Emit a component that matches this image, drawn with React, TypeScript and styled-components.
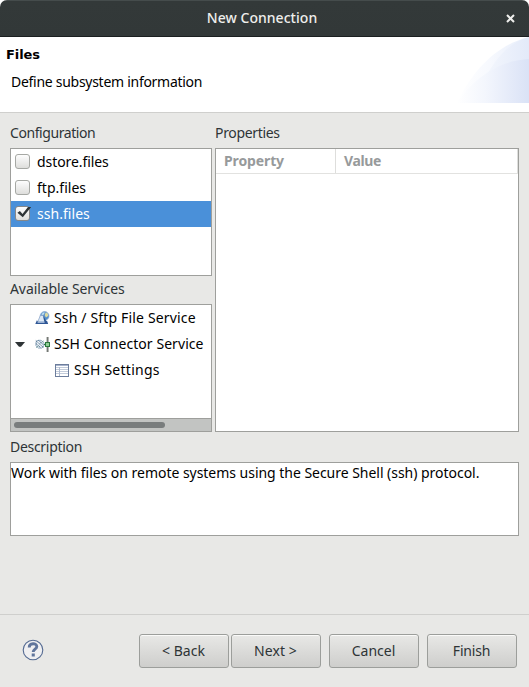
import React, { useState } from "react";
import styled, { createGlobalStyle, css } from "styled-components";

const GlobalStyle = createGlobalStyle`
  * { box-sizing: border-box; }
  html, body, #root { margin: 0; height: 100%; }
  body { background: #fff; overflow: hidden; }
  button { font: inherit; color: inherit; }
`;

const Dialog = styled.div`
  width: 529px;
  height: 687px;
  display: flex;
  flex-direction: column;
  overflow: hidden;
  background: #e8e8e6;
  border-radius: 7px 7px 0 0;
  color: #2e3436;
  font: 14px/18px "Noto Sans", "Open Sans", sans-serif;
  cursor: default;
`;

const TitleBar = styled.header`
  flex: none;
  height: 37px;
  display: grid;
  grid-template-columns: 37px 1fr 37px;
  align-items: center;
  background: linear-gradient(#333939, #323838);
  border-top: 1px solid #454c4c;
  border-bottom: 1px solid #1b1f20;
  color: #eeeeec;
`;

const Title = styled.h1`
  grid-column: 2;
  margin: 0 0 1px;
  padding-right: 5px;
  text-align: center;
  font: 500 14px/18px "Noto Sans", sans-serif;
  letter-spacing: 0.04px;
`;

const CloseButton = styled.button`
  width: 37px;
  height: 34px;
  padding: 0;
  border: 0;
  background: none;
  display: grid;
  place-items: center;
`;

const Banner = styled.section`
  flex: none;
  height: 76px;
  display: flex;
  justify-content: space-between;
  background: #fff;
  border-bottom: 1px solid #cfcfcd;
  color: #000;
`;

const BannerText = styled.div`
  padding: 8px 0 0 6px;
`;

const BannerTitle = styled.h2`
  margin: 0;
  font: bold 13px/19px "DejaVu Sans", sans-serif;
  letter-spacing: -0.1px;
`;

const BannerMessage = styled.p`
  margin: 9px 0 0 5px;
  letter-spacing: -0.28px;
`;

const Body = styled.main`
  flex: none;
  height: 501px;
  padding: 11px 10px 0;
`;

const Columns = styled.div`
  display: grid;
  grid-template-columns: 202px 304px;
  column-gap: 3px;
`;

const Column = styled.div`
  display: flex;
  flex-direction: column;
`;

const Label = styled.div<{ $track: number; $gap?: number }>`
  height: 18px;
  margin: ${(p) => p.$gap ?? 0}px 0 6px;
  letter-spacing: ${(p) => p.$track}px;
  white-space: nowrap;
`;

const Frame = styled.div<{ $height: number }>`
  height: ${(p) => p.$height}px;
  display: flex;
  flex-direction: column;
  overflow: hidden;
  background: #fff;
  border: 1px solid #9e9f9c;
  color: #000;
`;

const Row = styled.div<{ $selected?: boolean; $indent?: number; $track?: number }>`
  flex: none;
  height: 26px;
  display: flex;
  align-items: center;
  padding-left: ${(p) => p.$indent ?? 4}px;
  letter-spacing: ${(p) => p.$track ?? 0}px;
  white-space: nowrap;
  ${(p) => p.$selected && css`
    background: #4a90d9;
    color: #fff;
  `}
`;

const CheckBox = styled.span<{ $checked?: boolean }>`
  width: 15px;
  height: 15px;
  margin: 0 7px 1px 0;
  border: 1px solid ${(p) => (p.$checked ? "#86888a" : "#a6a8a4")};
  border-radius: 3px;
  background: linear-gradient(#fdfdfd, #dededc);
  svg { display: block; margin: -1px; overflow: visible; }
`;

const IconSlot = styled.span<{ $width: number; $gap: number }>`
  display: flex;
  width: ${(p) => p.$width}px;
  margin-right: ${(p) => p.$gap}px;
`;

const ScrollTrack = styled.div`
  height: 13px;
  margin-top: auto;
  padding: 3px;
  background: #c2c4c2;
  border-top: 1px solid #9e9f9c;
`;

const ScrollThumb = styled.div`
  width: 151px;
  height: 6px;
  border-radius: 3px;
  background: #797d7d;
`;

const TableHead = styled.div`
  display: grid;
  grid-template-columns: 120px 182px;
  height: 25px;
  border-bottom: 1px solid #e2e2e0;
  color: #979a9b;
  font-weight: 700;
`;

const HeadCell = styled.div<{ $track: number }>`
  padding: 3px 0 0 8px;
  border-right: 1px solid #dededc;
  letter-spacing: ${(p) => p.$track}px;
`;

const Description = styled.p`
  margin: 1px 0 0;
  white-space: nowrap;
  letter-spacing: -0.03px;
`;

const Footer = styled.footer`
  flex: 1;
  display: flex;
  align-items: flex-start;
  justify-content: space-between;
  padding: 19px 12px 0 22px;
  border-top: 1px solid #cfcfcd;
`;

const HelpButton = styled.button`
  width: 22px;
  height: 22px;
  margin-top: 5px;
  padding: 0;
  border: 0;
  background: none;
`;

const Buttons = styled.div`
  display: flex;
  gap: 8px;
`;

const ButtonPair = styled.div`
  display: flex;
  gap: 2px;
`;

const Button = styled.button<{ $track?: number }>`
  width: 90px;
  height: 34px;
  padding: 0 1px 1px 0;
  border: 1px solid #9c9e9b;
  border-radius: 3px;
  background: linear-gradient(#e8e8e6, #cececc);
  box-shadow: inset 0 1px #fafaf9;
  letter-spacing: ${(p) => p.$track ?? 0}px;
`;

const CloseIcon = () => (
  <svg width="9" height="9" viewBox="0 0 9 9" fill="none" stroke="currentColor" strokeWidth="2">
    <path d="M1 1l7 7M8 1l-7 7" />
  </svg>
);

const CheckMark = () => (
  <svg width="16" height="15" viewBox="0 0 16 15" fill="#2e3436">
    <path d="M2.4 6.8L4.9 5l2.6 2.9L13 1h3.2L7.8 11.3z" />
  </svg>
);

const BannerArt = () => (
  <svg width="75" height="66" viewBox="0 0 75 66">
    <defs>
      <linearGradient id="wash" x1="0" x2="1">
        <stop offset="0" stopColor="#fff" />
        <stop offset=".45" stopColor="#f7f9fe" />
        <stop offset="1" stopColor="#e6edfa" />
      </linearGradient>
      <linearGradient id="inner" x1="0" x2="1">
        <stop offset="0" stopColor="#f4f7fd" />
        <stop offset="1" stopColor="#e3eaf9" />
      </linearGradient>
      <linearGradient id="low" x1="0" x2="1">
        <stop offset="0" stopColor="#fff" />
        <stop offset=".4" stopColor="#f3f6fd" />
        <stop offset="1" stopColor="#dae2f6" />
      </linearGradient>
    </defs>
    <path fill="url(#wash)" d="M3 66C18 34 42 8 75 0v66z" />
    <path fill="url(#inner)" d="M30 44C40 23 54 6 75 0v44z" />
    <path fill="url(#low)" d="M3 66C18 42 46 23 75 22v44z" />
  </svg>
);

const FileServiceIcon = () => (
  <svg width="15" height="14" viewBox="0 0 15 14">
    <circle cx="9.6" cy="5" r="4.4" fill="#4f8bcb" stroke="#8aa9d0" strokeWidth=".7" />
    <path d="M10.6 1.6c1.9.1 2.9 1.7 2.5 3.5L11 6.6 9.6 4.2z" fill="#dcdaa0" />
    <path d="M7.8 1.4l2.2.1-1.4 2.3-2.4.5z" fill="#c3e2f0" />
    <path d="M5.4 4.4h2.8l1.6 6.8H2.6z" fill="#dce8f5" stroke="#7f9cc4" strokeWidth=".7" />
    <path d="M8.2 4.6L11.8 11H9.4z" fill="#2c5790" />
    <path d="M1.9 9.3L.3 13h12.9l-1.2-3.2-2 .9H3z" fill="#2f5796" />
    <path d="M2.6 11.2h7" stroke="#c8d8ee" />
  </svg>
);

const ConnectorIcon = () => (
  <svg width="15" height="15" viewBox="0 0 15 15">
    <path d="M11 0h1v15h-1z" fill="#c9cbc9" />
    <path d="M12 0h1v15h-1z" fill="#747874" />
    <path d="M13 0h1v15h-1z" fill="#b3b5b3" />
    <path d="M1.2 4.4L3 3.3h3l3 2.4v3.2l-2 2.2H3.4L.8 8.6z" fill="#eef3f8" stroke="#6f8ea8" strokeWidth=".7" />
    <path d="M.8 3.6l8 7.2M3.4 3.4l5.2 4.5M.8 6.4l5 4.4" stroke="#355b7c" strokeWidth=".8" strokeDasharray="1.6 .5" />
    <path d="M1 10.8l2.8-2.4M5.6 6.4l3-2.6" stroke="#5e8d91" strokeWidth=".7" />
    <path d="M9 7.5h2" stroke="#26744c" />
    <rect x="10.5" y="5.5" width="4" height="4" fill="#8fcf95" stroke="#2a773c" />
  </svg>
);

const SettingsIcon = () => (
  <svg width="14" height="13" viewBox="0 0 14 13" shapeRendering="crispEdges">
    <rect x=".5" y=".5" width="13" height="12" fill="#fff" stroke="#6c7d9c" />
    <path d="M1 1.5h12" stroke="#a7b3cc" />
    <path d="M1 3.5h12M1 5.5h12M1 7.5h12M1 9.5h12" stroke="#c3ccdb" />
    <path d="M4.5 3v9" stroke="#b0bbcf" />
  </svg>
);

const Expander = () => (
  <svg width="10" height="6" viewBox="0 0 10 6" fill="#2e3436">
    <path d="M0 1h10L6 5.8H4z" />
  </svg>
);

const HelpIcon = () => (
  <svg width="22" height="22" viewBox="0 0 22 22" fill="none">
    <circle cx="11" cy="11" r="9.8" fill="#efeff1" stroke="#536991" strokeWidth="1.1" />
    <path d="M7.2 8.4C7.2 3.6 14.8 3.7 14.8 7.6c0 2.6-3.6 2.6-3.6 5.4" stroke="#60759c" strokeWidth="2.9" />
    <path d="M9.7 14.5h3.1v3H9.7z" fill="#60759c" />
  </svg>
);

const configurations = [
  { name: "dstore.files", track: -0.08 },
  { name: "ftp.files", track: 0.02 },
  { name: "ssh.files", track: 0.04 },
];

export default function App() {
  const [selected, setSelected] = useState("ssh.files");
  return (
    <>
      <GlobalStyle />
      <Dialog>
        <TitleBar>
          <Title>New Connection</Title>
          <CloseButton aria-label="Close"><CloseIcon /></CloseButton>
        </TitleBar>
        <Banner>
          <BannerText>
            <BannerTitle>Files</BannerTitle>
            <BannerMessage>Define subsystem information</BannerMessage>
          </BannerText>
          <BannerArt />
        </Banner>
        <Body>
          <Columns>
            <Column>
              <Label $track={-0.42}>Configuration</Label>
              <Frame $height={128}>
                {configurations.map(({ name, track }) => (
                  <Row key={name} $track={track} $selected={name === selected} onClick={() => setSelected(name)}>
                    <CheckBox $checked={name === selected}>{name === selected && <CheckMark />}</CheckBox>
                    {name}
                  </Row>
                ))}
              </Frame>
              <Label $track={-0.08} $gap={4}>Available Services</Label>
              <Frame $height={128}>
                <Row $indent={24} $track={0.16}>
                  <IconSlot $width={15} $gap={4}><FileServiceIcon /></IconSlot>
                  Ssh / Sftp File Service
                </Row>
                <Row $indent={4} $track={0.06}>
                  <IconSlot $width={10} $gap={10}><Expander /></IconSlot>
                  <IconSlot $width={15} $gap={4}><ConnectorIcon /></IconSlot>
                  SSH Connector Service
                </Row>
                <Row $indent={44} $track={0.26}>
                  <IconSlot $width={14} $gap={5}><SettingsIcon /></IconSlot>
                  SSH Settings
                </Row>
                <ScrollTrack><ScrollThumb /></ScrollTrack>
              </Frame>
            </Column>
            <Column>
              <Label $track={-0.34}>Properties</Label>
              <Frame $height={284}>
                <TableHead>
                  <HeadCell $track={-0.12}>Property</HeadCell>
                  <HeadCell $track={-0.4}>Value</HeadCell>
                </TableHead>
              </Frame>
            </Column>
          </Columns>
          <Label $track={-0.3} $gap={6}>Description</Label>
          <Frame $height={74}>
            <Description>Work with files on remote systems using the Secure Shell (ssh) protocol.</Description>
          </Frame>
        </Body>
        <Footer>
          <HelpButton aria-label="Help"><HelpIcon /></HelpButton>
          <Buttons>
            <ButtonPair>
              <Button>&lt; Back</Button>
              <Button $track={0.1}>Next &gt;</Button>
            </ButtonPair>
            <Button>Cancel</Button>
            <Button $track={-0.2}>Finish</Button>
          </Buttons>
        </Footer>
      </Dialog>
    </>
  );
}
